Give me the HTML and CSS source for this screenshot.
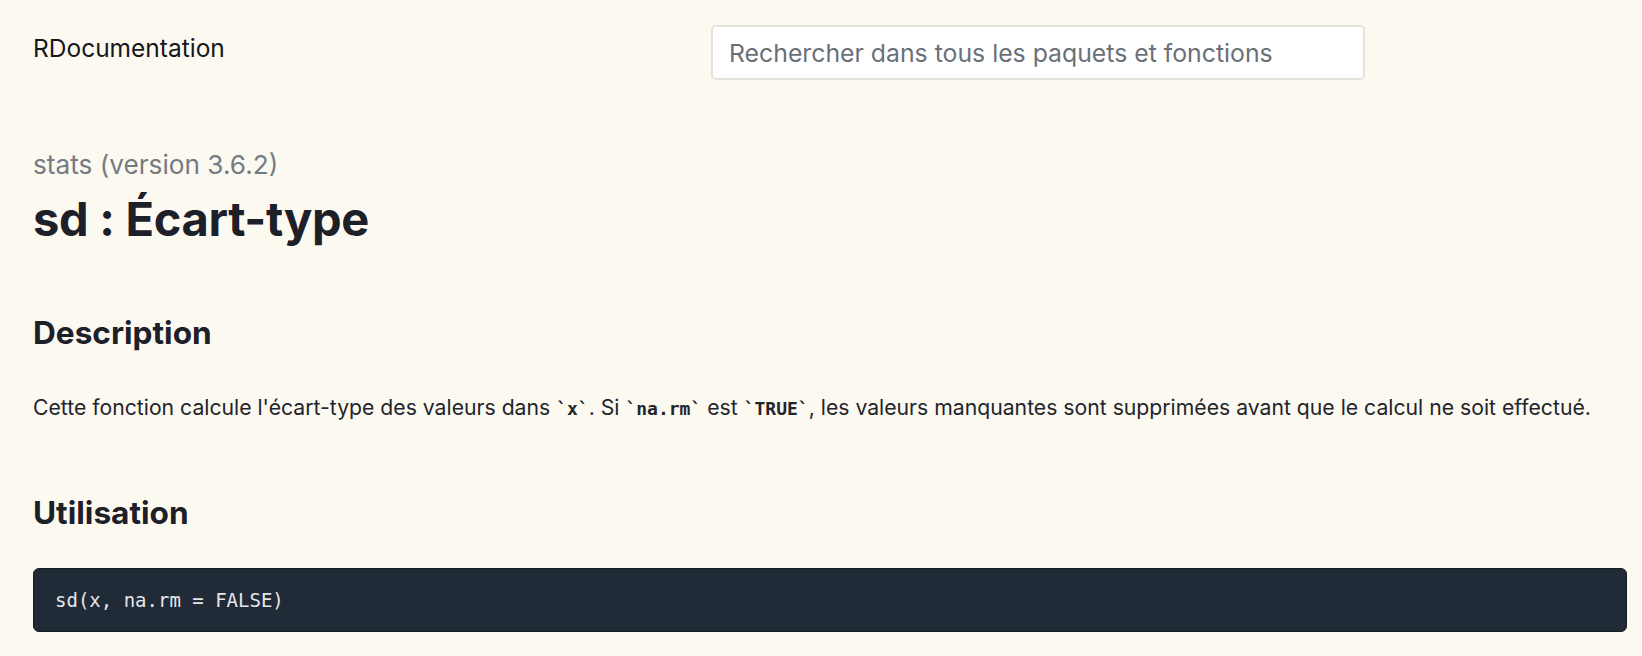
FILE: index.html
```html
<!DOCTYPE html>
<html lang="fr">
<head>
<meta charset="utf-8">
<title>sd : Écart-type</title>
<link rel="stylesheet" href="styles.css">
</head>
<body>
<div class="page">
  <header class="header">
    <div class="logo">RDocumentation</div>
    <input class="search" type="text" placeholder="Rechercher dans tous les paquets et fonctions">
  </header>
  <main class="content">
    <div class="pkg">stats (version 3.6.2)</div>
    <h1 class="title">sd : Écart-type</h1>
    <h2 class="section-title section-desc">Description</h2>
    <p class="text">Cette fonction calcule l'écart-type des valeurs dans <code class="inline">`x`</code>. Si <code class="inline">`na.rm`</code> est <code class="inline">`TRUE`</code>, les valeurs manquantes sont supprimées avant que le calcul ne soit effectué.</p>
    <h2 class="section-title section-usage">Utilisation</h2>
    <pre class="code-block"><code>sd(x, na.rm = FALSE)</code></pre>
  </main>
</div>
</body>
</html>
```

FILE: styles.css
```css
html, body {
  margin: 0;
  padding: 0;
  background: #fcf9f1;
}

body {
  font-family: "Inter", "Liberation Sans", sans-serif;
  color: #1d2028;
}

.page {
  padding: 0 15px 0 33px;
}

.header {
  display: flex;
  align-items: flex-start;
  padding-top: 25px;
}

.logo {
  width: 678px;
  flex: none;
  margin-top: 8px;
  font-size: 24.5px;
  line-height: 30px;
  color: #15171c;
}

.search {
  box-sizing: border-box;
  width: 654px;
  height: 55px;
  margin: 0;
  padding: 0 16px;
  border: 2px solid #e6e3dc;
  border-radius: 5px;
  background: #ffffff;
  font-family: "Inter", "Liberation Sans", sans-serif;
  font-size: 24.8px;
  color: #4b5563;
  outline: none;
}

.search::placeholder {
  color: #6b7078;
  opacity: 1;
}

.pkg {
  margin-top: 69px;
  font-size: 26.2px;
  line-height: 32px;
  color: #767b83;
}

.title {
  margin: 12px 0 0;
  font-size: 47px;
  line-height: 52px;
  font-weight: 700;
  color: #1d2029;
  letter-spacing: -0.3px;
}

.section-title {
  margin: 0;
  font-size: 31.6px;
  line-height: 40px;
  font-weight: 700;
  color: #1d2029;
}

.section-desc {
  margin-top: 68px;
}

.text {
  margin: 40px 0 0;
  font-size: 21.2px;
  line-height: 28px;
  color: #22252b;
}

.inline {
  font-family: "DejaVu Sans Mono", "Liberation Mono", monospace;
  font-weight: 700;
  font-size: 18px;
}

.section-usage {
  margin-top: 70px;
}

.code-block {
  box-sizing: border-box;
  margin: 35px 0 0;
  height: 64px;
  display: flex;
  align-items: center;
  padding: 0 21px;
  background: #212a37;
  border: 1px solid #151b24;
  border-radius: 6px;
  color: #e4e6ea;
  font-family: "DejaVu Sans Mono", "Liberation Mono", monospace;
  font-size: 19px;
}
```
